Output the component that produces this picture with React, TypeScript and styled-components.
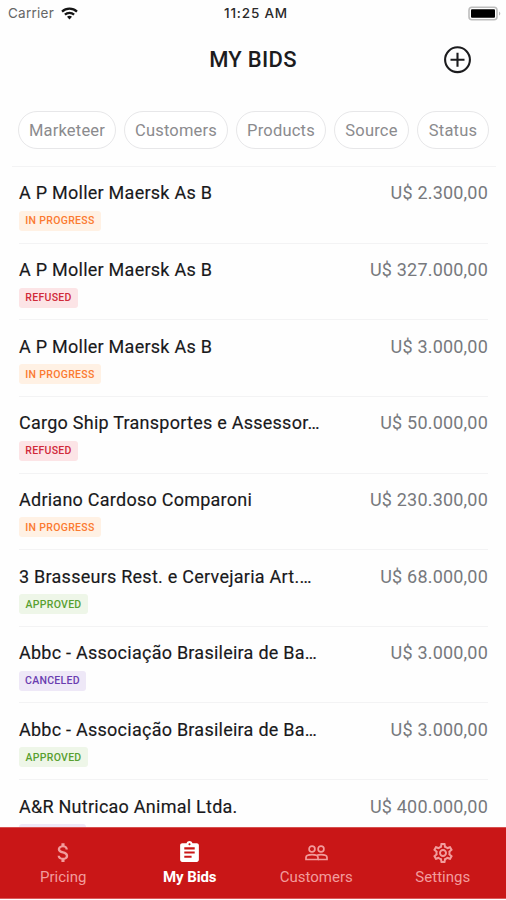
import React from 'react';
import styled, { createGlobalStyle } from 'styled-components';
import { MdAssignment, MdAttachMoney, MdOutlineSettings } from 'react-icons/md';

const GlobalStyle = createGlobalStyle`
  *, *::before, *::after { box-sizing: border-box; }
  body { margin: 0; background: #fefefe; font-family: Roboto, sans-serif; overflow: hidden; }
`;

type Status = 'progress' | 'refused' | 'approved' | 'canceled';

const statuses: Record<Status, { label: string; color: string; background: string; width: number }> = {
  progress: { label: 'IN PROGRESS', color: '#fb7a30', background: '#fff1e4', width: 82 },
  refused: { label: 'REFUSED', color: '#d02a3a', background: '#fce4e6', width: 59 },
  approved: { label: 'APPROVED', color: '#58a030', background: '#eef6e8', width: 69 },
  canceled: { label: 'CANCELED', color: '#6a3db0', background: '#eee8f7', width: 67 },
};

const bids: { name: string; amount: string; status: Status }[] = [
  { name: 'A P Moller Maersk As B', amount: 'U$ 2.300,00', status: 'progress' },
  { name: 'A P Moller Maersk As B', amount: 'U$ 327.000,00', status: 'refused' },
  { name: 'A P Moller Maersk As B', amount: 'U$ 3.000,00', status: 'progress' },
  { name: 'Cargo Ship Transportes e Assessor…', amount: 'U$ 50.000,00', status: 'refused' },
  { name: 'Adriano Cardoso Comparoni', amount: 'U$ 230.300,00', status: 'progress' },
  { name: '3 Brasseurs Rest. e Cervejaria Art.…', amount: 'U$ 68.000,00', status: 'approved' },
  { name: 'Abbc - Associação Brasileira de Ba…', amount: 'U$ 3.000,00', status: 'canceled' },
  { name: 'Abbc - Associação Brasileira de Ba…', amount: 'U$ 3.000,00', status: 'approved' },
  { name: 'A&R Nutricao Animal Ltda.', amount: 'U$ 400.000,00', status: 'canceled' },
];

const filters = [
  { label: 'Marketeer', width: 98 },
  { label: 'Customers', width: 104 },
  { label: 'Products', width: 90 },
  { label: 'Source', width: 75 },
  { label: 'Status', width: 72 },
];

const Screen = styled.div`
  display: flex;
  flex-direction: column;
  width: 506px;
  height: 900px;
  overflow: hidden;
  background: #fefefe;
`;

const StatusBar = styled.div`
  display: grid;
  grid-template-columns: 1fr auto 1fr;
  align-items: center;
  flex: none;
  height: 26px;
  padding: 0 5px 0 8px;
`;

const Carrier = styled.div`
  display: flex;
  align-items: center;
  gap: 7px;
  font: 400 13.5px/26px Inter, sans-serif;
  letter-spacing: 0.25px;
  color: #666;
`;

const Clock = styled.div`
  padding-left: 3px;
  font: 500 13.5px/26px Inter, sans-serif;
  letter-spacing: 0.8px;
  color: #2b2b2b;
`;

const BatteryIcon = styled.svg`
  justify-self: end;
`;

const Header = styled.header`
  display: grid;
  grid-template-columns: 1fr auto 1fr;
  align-items: center;
  flex: none;
  height: 67px;
  padding: 0 35px;
`;

const Title = styled.h1`
  grid-column: 2;
  margin: 0;
  font-size: 22px;
  line-height: 26px;
  letter-spacing: 0.3px;
  font-weight: 500;
  color: #1c1c1e;
`;

const AddButton = styled.button`
  display: flex;
  justify-self: end;
  padding: 0;
  border: 0;
  background: none;
  color: #1c1c1e;
`;

const Filters = styled.div`
  display: flex;
  justify-content: space-between;
  flex: none;
  height: 55px;
  margin: 18px 17px 0 18px;
`;

const Chip = styled.button<{ $width: number }>`
  width: ${(p) => p.$width}px;
  height: 38px;
  padding: 2px 0 0;
  border: 1.5px solid #e7e7e9;
  border-radius: 19px;
  background: #fff;
  font: 400 16.5px/20px Roboto, sans-serif;
  letter-spacing: 0.2px;
  color: #8b8b8e;
`;

const List = styled.main`
  flex: 1;
  min-height: 0;
  margin: 0 10px 0 12px;
  border-top: 1px solid #f3f3f4;
  overflow: hidden;
`;

const Row = styled.div`
  display: grid;
  grid-template-columns: 1fr auto;
  align-content: start;
  height: 76.65px;
  margin: 0 8px 0 7px;
  padding-top: 14.4px;
  border-bottom: 1px solid #f3f3f4;
`;

const Name = styled.div`
  font-size: 18px;
  line-height: 24px;
  letter-spacing: 0.25px;
  color: #19191b;
  -webkit-text-stroke: 0.15px #19191b;
  white-space: nowrap;
`;

const Amount = styled.div`
  font-size: 18px;
  line-height: 24px;
  letter-spacing: 0.2px;
  color: #77797d;
  white-space: nowrap;
`;

const Badge = styled.span<{ $status: Status }>`
  display: flex;
  align-items: center;
  justify-content: center;
  width: ${(p) => statuses[p.$status].width}px;
  height: 20px;
  margin-top: 5.5px;
  border-radius: 3px;
  background: ${(p) => statuses[p.$status].background};
  color: ${(p) => statuses[p.$status].color};
  font-size: 10.5px;
  font-weight: 500;
  letter-spacing: 0.3px;
  white-space: nowrap;
`;

const TabBar = styled.nav`
  display: grid;
  grid-template-columns: repeat(4, 1fr);
  flex: none;
  height: 72px;
  margin-bottom: 1px;
  background: #c91617;
  border-top: 1px solid #d65050;
  border-bottom: 1px solid #dc5a5a;
`;

const Tab = styled.div<{ $active?: boolean }>`
  display: flex;
  flex-direction: column;
  align-items: center;
  padding-top: 12px;
  font-size: 15px;
  line-height: 20px;
  font-weight: ${(p) => (p.$active ? 700 : 400)};
  letter-spacing: ${(p) => (p.$active ? -0.1 : 0)}px;
  color: ${(p) => (p.$active ? '#fff' : '#f29c9c')};
`;

const TabIcon = styled.span`
  display: flex;
  align-items: center;
  justify-content: center;
  height: 25px;
  margin-bottom: 2px;
`;

export default function App() {
  return (
    <Screen>
      <GlobalStyle />
      <StatusBar>
        <Carrier>
          Carrier
          <svg width="17" height="13" viewBox="0 0 17 13" fill="none" stroke="#151515" strokeWidth="2.2">
            <path d="M1 4.6C5.2 .6 11.8 .6 16 4.6" />
            <path d="M3.9 7.6c2.6-2.4 6.6-2.4 9.2 0" />
            <path d="M6 9.8c1.5-1.3 3.5-1.3 5 0L8.5 12.4Z" fill="#151515" stroke="none" />
          </svg>
        </Carrier>
        <Clock>11:25 AM</Clock>
        <BatteryIcon width="33" height="15" viewBox="0 0 33 15">
          <rect x="1" y="1.2" width="28" height="12.6" rx="3" fill="#fff" stroke="#bdbdbd" strokeWidth="1.6" />
          <rect x="3" y="3.2" width="24" height="8.6" rx="1" fill="#000" />
          <path d="M31 5.4c1.8.8 1.8 3.4 0 4.2Z" fill="#bbb" />
        </BatteryIcon>
      </StatusBar>
      <Header>
        <Title>MY BIDS</Title>
        <AddButton aria-label="Add bid">
          <svg width="28" height="28" viewBox="0 0 28 28" fill="none" stroke="currentColor" strokeWidth="2.1">
            <circle cx="14.5" cy="13.7" r="12.4" />
            <path d="M14.5 6.7v14M7.5 13.7h14" />
          </svg>
        </AddButton>
      </Header>
      <Filters>
        {filters.map((f) => (
          <Chip key={f.label} $width={f.width}>{f.label}</Chip>
        ))}
      </Filters>
      <List>
        {bids.map((bid, i) => (
          <Row key={i}>
            <Name>{bid.name}</Name>
            <Amount>{bid.amount}</Amount>
            <Badge $status={bid.status}>{statuses[bid.status].label}</Badge>
          </Row>
        ))}
      </List>
      <TabBar>
        <Tab><TabIcon><MdAttachMoney size={25} /></TabIcon>Pricing</Tab>
        <Tab $active><TabIcon><MdAssignment size={25} /></TabIcon>My Bids</Tab>
        <Tab>
          <TabIcon>
            <svg width="23" height="16" viewBox="0 0 23 16" fill="none" stroke="currentColor" strokeWidth="1.7">
              <circle cx="7" cy="4" r="2.9" />
              <circle cx="16" cy="4" r="2.9" />
              <path d="M1 14.5v-2.1c0-1.7 2.9-2.8 6-2.8s6 1.1 6 2.8v2.1Z" />
              <path d="M13 14.5h9v-2.1c0-1.7-2.9-2.8-6-2.8-1.5 0-2.8.2-4 .7" />
            </svg>
          </TabIcon>
          Customers
        </Tab>
        <Tab><TabIcon><MdOutlineSettings size={24} /></TabIcon>Settings</Tab>
      </TabBar>
    </Screen>
  );
}
